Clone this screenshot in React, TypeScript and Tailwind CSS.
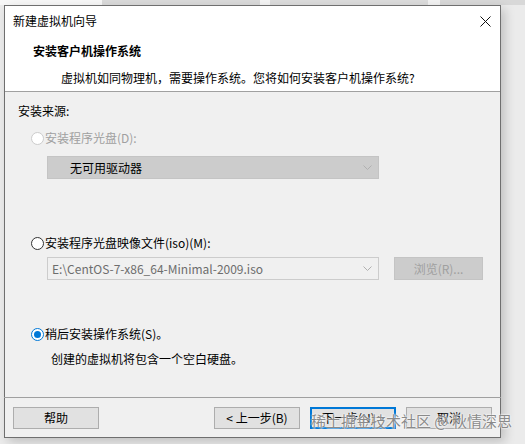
import React from "react";

const font = { fontFamily: '"Noto Sans CJK SC", "Microsoft YaHei", sans-serif' };

function Radio({ checked, disabled }: { checked?: boolean; disabled?: boolean }) {
  return (
    <span
      className={`flex h-[13px] w-[13px] shrink-0 items-center justify-center rounded-full border bg-white ${
        checked ? "border-[#0078d7]" : disabled ? "border-[#cccccc]" : "border-[#333333]"
      }`}
    >
      {checked && <span className="h-[7px] w-[7px] rounded-full bg-[#0078d7]" />}
    </span>
  );
}

function Chevron({ color }: { color: string }) {
  return (
    <svg width="9" height="6" viewBox="0 0 9 6" fill="none">
      <path d="M0.5 0.5 L4.5 4.5 L8.5 0.5" stroke={color} strokeWidth="1" />
    </svg>
  );
}

function Btn({ children, focused }: { children: React.ReactNode; focused?: boolean }) {
  return (
    <div
      className={`flex h-[22px] w-[86px] items-center justify-center bg-[#e1e1e1] text-[12px] text-black ${
        focused ? "border-2 border-[#0078d7]" : "border border-[#adadad]"
      }`}
    >
      {children}
    </div>
  );
}

export default function App() {
  return (
    <div className="relative h-[444px] w-[525px] overflow-hidden bg-[#ebebeb]" style={font}>
      {/* windows peeking out behind the dialog */}
      <div className="flex h-[5px]">
        <div className="w-[102px] bg-[#f7f7f7]" />
        <div className="w-[158px] bg-[#dadada]" />
        <div className="w-[10px] bg-[#f4f4f4]" />
        <div className="w-[158px] bg-[#dcdcdc]" />
        <div className="w-[12px] bg-[#f2f2f2]" />
        <div className="flex-1 bg-[#d8d8d8]" />
      </div>

      <div className="flex pl-[4px]">
        <div className="flex h-[433px] w-[497px] flex-col border border-[#6f6f6f] bg-[#f0f0f0] shadow-[4px_4px_10px_rgba(0,0,0,0.18)]">
          {/* title bar + header */}
          <div className="flex h-[85px] flex-col bg-white">
            <div className="flex h-[30px] items-center justify-between pl-[8px] pr-[9px]">
              <span className="text-[12px] text-black">新建虚拟机向导</span>
              <svg width="11" height="11" viewBox="0 0 11 11">
                <path d="M0.5 0.5 L10.5 10.5 M10.5 0.5 L0.5 10.5" stroke="#111" strokeWidth="1" />
              </svg>
            </div>
            <div className="pl-[28px] pt-[6px] text-[12px] font-bold leading-[18px] text-black">安装客户机操作系统</div>
            <div className="pl-[56px] pt-[10px] text-[12px] leading-[16px] text-black">
              虚拟机如同物理机，需要操作系统。您将如何安装客户机操作系统?
            </div>
          </div>
          <div className="h-px bg-[#a0a0a0]" />

          {/* install source options */}
          <div className="flex flex-1 flex-col pl-[13px]">
            <div className="pt-[11px] text-[12px] leading-[16px] text-black">安装来源:</div>

            <div className="mt-[11px] flex items-center gap-[1px] pl-[13px]">
              <Radio disabled />
              <span className="text-[12px] leading-[16px] text-[#a0a0a0]">安装程序光盘(D):</span>
            </div>
            <div className="ml-[29px] mt-[10px] flex h-[23px] w-[332px] items-center justify-between border border-[#c4c4c4] bg-[#cccccc] pl-[22px] pr-[6px]">
              <span className="text-[12px] text-black">无可用驱动器</span>
              <Chevron color="#b0b0b0" />
            </div>

            <div className="mt-[56px] flex items-center gap-[1px] pl-[13px]">
              <Radio />
              <span className="text-[12px] leading-[16px] text-black">安装程序光盘映像文件(iso)(M):</span>
            </div>
            <div className="mt-[6px] flex items-center pl-[29px]">
              <div className="flex h-[23px] w-[332px] items-center justify-between border border-[#cccccc] bg-[#f0f0f0] pl-[4px] pr-[6px]">
                <span className="text-[12px] text-[#6d6d6d]">E:\CentOS-7-x86_64-Minimal-2009.iso</span>
                <Chevron color="#b0b0b0" />
              </div>
              <div className="ml-[15px] flex h-[23px] w-[89px] items-center justify-center border border-[#c4c4c4] bg-[#cccccc] text-[12px] text-[#a0a0a0]">
                浏览(R)...
              </div>
            </div>

            <div className="mt-[46px] flex items-center gap-[1px] pl-[13px]">
              <Radio checked />
              <span className="text-[12px] leading-[16px] text-black">稍后安装操作系统(S)。</span>
            </div>
            <div className="mt-[9px] pl-[33px] text-[12px] leading-[16px] text-black">创建的虚拟机将包含一个空白硬盘。</div>
          </div>

          {/* footer */}
          <div className="mx-[-1px] h-px bg-[#a0a0a0]" />
          <div className="flex h-[39px] items-center pl-[8px] pr-[8px]">
            <Btn>帮助</Btn>
            <div className="flex-1" />
            <div className="flex gap-[10px]">
              <Btn>&lt; 上一步(B)</Btn>
              <Btn focused>下一步(N) &gt;</Btn>
              <Btn>取消</Btn>
            </div>
          </div>
        </div>
      </div>

      {/* site watermark */}
      <div
        className="absolute left-[311px] top-[410px] whitespace-nowrap text-[15px] leading-[22px] text-[#8a8a8a]"
        style={{ textShadow: "0 0 2px #fff, 0 0 2px #fff" }}
      >
        稀土掘金技术社区 @ 秋情深思
      </div>
    </div>
  );
}
